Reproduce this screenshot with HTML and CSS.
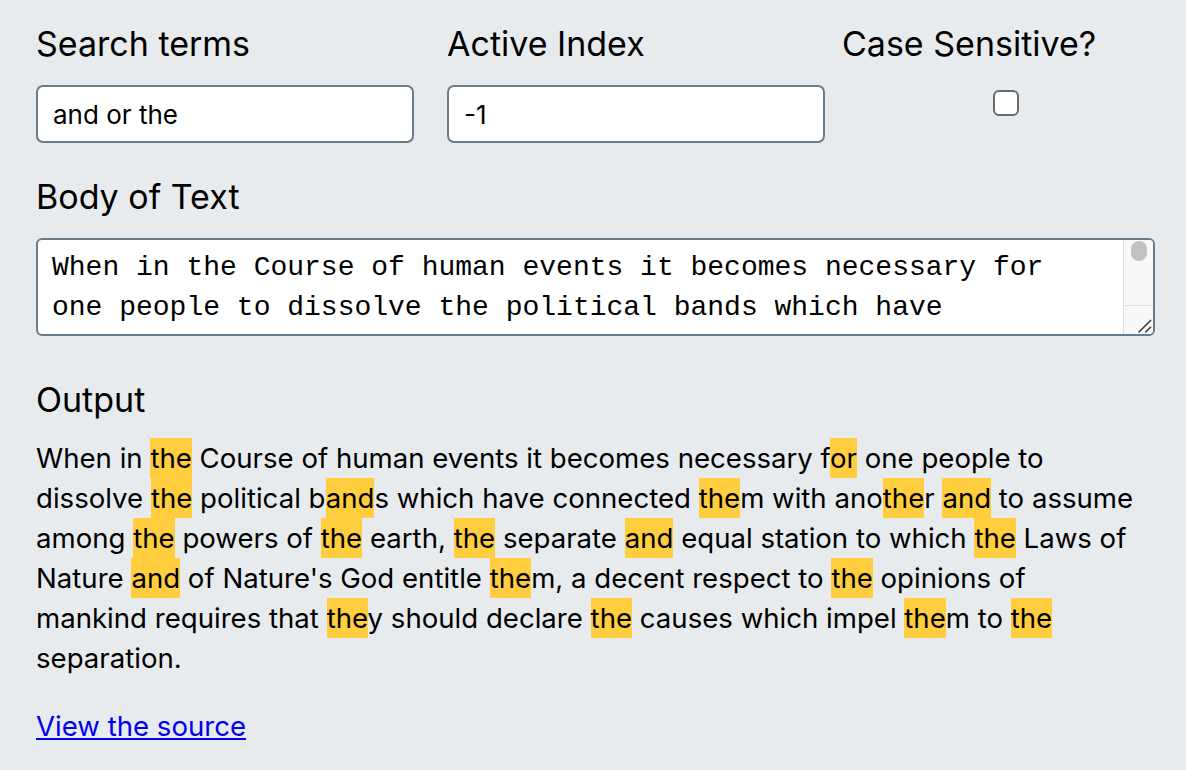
FILE: index.html
```html
<!DOCTYPE html>
<html lang="en">
<head>
<meta charset="utf-8">
<title>Search highlighter</title>
<link rel="stylesheet" href="styles.css">
</head>
<body>
<main class="page">
  <div class="controls">
    <div class="field">
      <label class="label" for="terms">Search terms</label>
      <input class="text-input" id="terms" type="text" value="and or the">
    </div>
    <div class="field">
      <label class="label" for="index">Active Index</label>
      <input class="text-input" id="index" type="text" value="-1">
    </div>
    <div class="field field-check">
      <label class="label" for="case">Case Sensitive?</label>
      <div class="check-wrap"><input class="check" id="case" type="checkbox"></div>
    </div>
  </div>

  <section class="section">
    <label class="label" for="body">Body of Text</label>
    <div class="textarea-box">
      <textarea class="body-text" id="body" spellcheck="false">When in the Course of human events it becomes necessary for one people to dissolve the political bands which have connected them with another and to assume among the powers of the earth, the separate and equal station to which the Laws of Nature and of Nature's God entitle them, a decent respect to the opinions of mankind requires that they should declare the causes which impel them to the separation.</textarea>
      <div class="scrollbar" aria-hidden="true">
        <div class="track"><div class="thumb"></div></div>
        <div class="resizer">
          <svg width="30" height="28" viewBox="0 0 30 28">
            <path d="M15 27 L28 14 M22 27 L28 21" stroke="#3a3a3a" stroke-width="1.6" fill="none"/>
          </svg>
        </div>
      </div>
    </div>
  </section>

  <section class="section">
    <h2 class="label">Output</h2>
    <p class="output">When in <mark class="hl">the</mark> Course of human events it becomes necessary f<mark class="hl">or</mark> one people to dissolve <mark class="hl">the</mark> political b<mark class="hl">and</mark>s which have connected <mark class="hl">the</mark>m with ano<mark class="hl">the</mark>r <mark class="hl">and</mark> to assume among <mark class="hl">the</mark> powers of <mark class="hl">the</mark> earth, <mark class="hl">the</mark> separate <mark class="hl">and</mark> equal station to which <mark class="hl">the</mark> Laws of Nature <mark class="hl">and</mark> of Nature's God entitle <mark class="hl">the</mark>m, a decent respect to <mark class="hl">the</mark> opinions of mankind requires that <mark class="hl">the</mark>y should declare <mark class="hl">the</mark> causes which impel <mark class="hl">the</mark>m to <mark class="hl">the</mark> separation.</p>
  </section>

  <a class="source" href="#">View the source</a>
</main>
</body>
</html>
```

FILE: styles.css
```css
* { box-sizing: border-box; }

html, body {
  margin: 0;
  background: #e8ebee;
}

body {
  font-family: Inter, "Liberation Sans", Arial, sans-serif;
  color: #000;
}

.page {
  padding: 22px 0 0 36px;
  width: 1146px;
}

.controls {
  display: grid;
  grid-template-columns: 411px 395px 328px;
}

.field {
  display: flex;
  flex-direction: column;
}

.label {
  display: block;
  margin: 0 0 19px;
  font-size: 34px;
  font-weight: 400;
  line-height: 44px;
}

.text-input {
  width: 378px;
  height: 58px;
  padding: 0 15px;
  border: 2px solid #687b8b;
  border-radius: 7px;
  background: #fff;
  font-family: inherit;
  font-size: 26px;
  color: #000;
  outline: none;
}

.check-wrap {
  display: flex;
  justify-content: center;
  padding-top: 5px;
}

.check {
  appearance: none;
  -webkit-appearance: none;
  margin: 0;
  width: 26px;
  height: 26px;
  border: 2px solid #6b6b6b;
  border-radius: 6px;
  background: #fff;
}

.section {
  margin-top: 32px;
}

.section + .section {
  margin-top: 42px;
}

.textarea-box {
  position: relative;
  width: 1119px;
}

.body-text {
  display: block;
  width: 100%;
  height: 98px;
  margin: 0;
  padding: 8px 60px 7px 14px;
  border: 2px solid #687b8b;
  border-radius: 6px;
  background: #fff;
  font-family: "Liberation Mono", "Courier New", monospace;
  font-size: 28px;
  line-height: 40px;
  color: #000;
  outline: none;
  resize: none;
  overflow: hidden;
}

.scrollbar {
  position: absolute;
  top: 2px;
  right: 2px;
  bottom: 2px;
  width: 30px;
  display: flex;
  flex-direction: column;
  background: #f8f8f8;
  border-left: 1px solid #e2e2e2;
  border-radius: 0 4px 4px 0;
  overflow: hidden;
}

.track {
  flex: 1;
  padding: 1px 0 0 7px;
}

.thumb {
  width: 16px;
  height: 20px;
  border-radius: 8px;
  background: #c1c1c1;
}

.resizer {
  height: 29px;
  border-top: 1px solid #dedede;
  display: flex;
  justify-content: flex-end;
  align-items: flex-end;
}

.resizer svg {
  display: block;
}

.output {
  max-width: 1100px;
  margin: 0;
  margin-top: -3px;
  font-size: 27.6px;
  line-height: 40px;
}

.hl {
  background: #ffcd3e;
  color: inherit;
  padding: 3px 0;
}

.source {
  display: inline-block;
  margin-top: 28px;
  font-size: 27.6px;
  line-height: 40px;
  color: #0000ee;
}
```
